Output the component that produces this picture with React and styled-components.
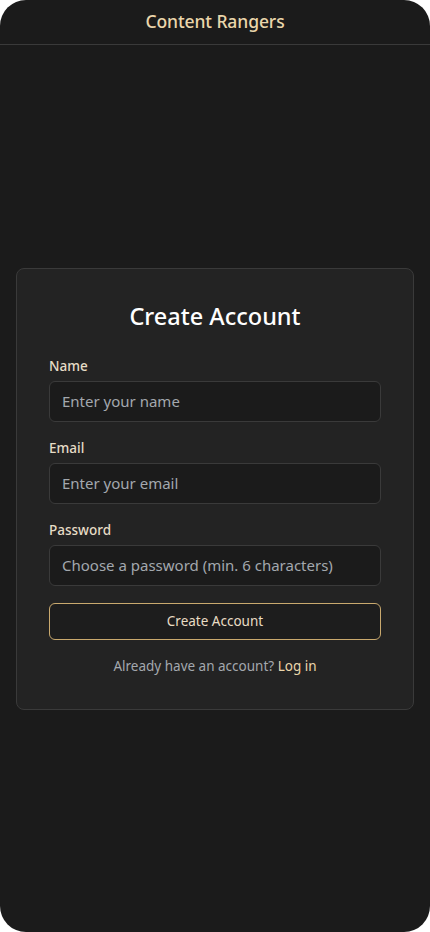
import React from 'react';
import styled, { createGlobalStyle } from 'styled-components';

const GlobalStyle = createGlobalStyle`
  html, body {
    margin: 0;
    padding: 0;
    background: #ffffff;
  }
  * {
    box-sizing: border-box;
  }
`;

const App = () => {
  return (
    <>
      <GlobalStyle />
      <Frame>
        <Header>
          <Brand>Content Rangers</Brand>
        </Header>
        <Main>
          <Card>
            <Title>Create Account</Title>
            <Form onSubmit={(e) => e.preventDefault()}>
              <Field>
                <Label>Name</Label>
                <Input type="text" placeholder="Enter your name" />
              </Field>
              <Field>
                <Label>Email</Label>
                <Input type="email" placeholder="Enter your email" />
              </Field>
              <Field>
                <Label>Password</Label>
                <Input type="password" placeholder="Choose a password (min. 6 characters)" />
              </Field>
              <SubmitButton type="submit">Create Account</SubmitButton>
            </Form>
            <Footnote>
              Already have an account? <LoginLink href="#">Log in</LoginLink>
            </Footnote>
          </Card>
        </Main>
      </Frame>
    </>
  );
};

export default App;

const Frame = styled.div`
  width: 430px;
  height: 932px;
  background: #1b1b1b;
  border-radius: 26px;
  overflow: hidden;
  display: flex;
  flex-direction: column;
  font-family: 'Noto Sans', 'Open Sans', sans-serif;
`;

const Header = styled.header`
  height: 45px;
  flex-shrink: 0;
  display: flex;
  align-items: center;
  justify-content: center;
  padding-bottom: 2px;
  border-bottom: 1px solid #3a3a3a;
`;

const Brand = styled.h1`
  margin: 0;
  font-size: 17.5px;
  font-weight: 500;
  color: #ead6ab;
  letter-spacing: -0.1px;
`;

const Main = styled.main`
  flex: 1;
  display: flex;
  align-items: center;
  justify-content: center;
  padding: 0 16px;
`;

const Card = styled.section`
  width: 100%;
  background: #232323;
  border: 1px solid #3a3a3a;
  border-radius: 8px;
  padding: 32px 32px 33px;
`;

const Title = styled.h2`
  margin: 0 0 25px;
  text-align: center;
  font-size: 23.5px;
  line-height: 30px;
  font-weight: 500;
  color: #ffffff;
`;

const Form = styled.form`
  display: flex;
  flex-direction: column;
  gap: 16px;
`;

const Field = styled.div`
  display: flex;
  flex-direction: column;
  gap: 5px;
`;

const Label = styled.label`
  font-size: 13.5px;
  line-height: 20px;
  font-weight: 500;
  color: #e6dcc6;
`;

const Input = styled.input`
  height: 41px;
  width: 100%;
  padding: 0 12px;
  background: #1b1b1b;
  border: 1px solid #3a3a3a;
  border-radius: 6px;
  font-family: inherit;
  font-size: 15px;
  color: #e8e8e8;
  outline: none;

  &::placeholder {
    color: #a3a8ae;
  }
`;

const SubmitButton = styled.button`
  margin-top: 1px;
  height: 37px;
  width: 100%;
  background: #1d1d1d;
  border: 1px solid #c9a96e;
  border-radius: 6px;
  font-family: inherit;
  font-size: 13.5px;
  color: #e8dcc4;
  cursor: pointer;
`;

const Footnote = styled.p`
  margin: 16px 0 0;
  text-align: center;
  font-size: 13.5px;
  line-height: 20px;
  color: #a3a8ae;
`;

const LoginLink = styled.a`
  color: #ead6ab;
  text-decoration: none;
`;
